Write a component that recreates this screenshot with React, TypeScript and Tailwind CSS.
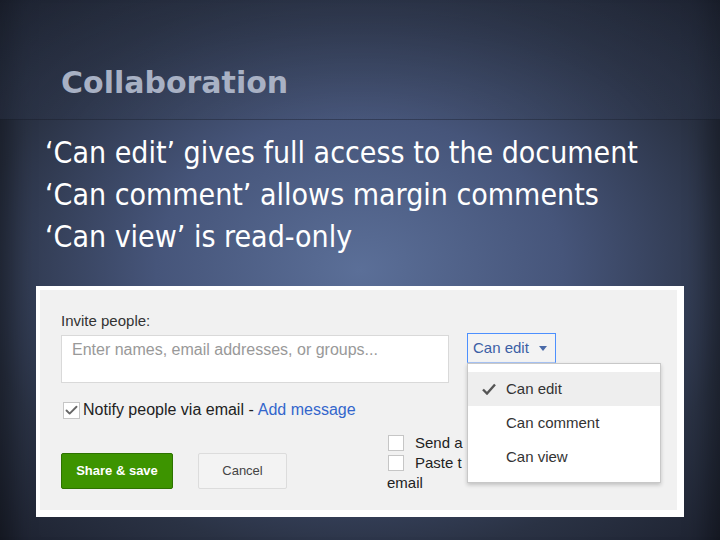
import { Check } from "lucide-react";

function MenuItem({ label, active }: { label: string; active?: boolean }) {
  return (
    <div className={active ? "flex items-center h-[34px] bg-[#eeeeee]" : "flex items-center h-[34px]"}>
      <div className="w-[38px] flex justify-center pl-[4px]">
        {active && (
          <svg width="14" height="12" viewBox="0 0 14 12">
            <path d="M1 6.5 L5 10.5 L13 1.5" stroke="#555" strokeWidth="2.4" fill="none" />
          </svg>
        )}
      </div>
      <span>{label}</span>
    </div>
  );
}

export default function App() {
  return (
    <div className="w-[720px] h-[540px] relative overflow-hidden bg-[radial-gradient(ellipse_at_50%_50%,#5b6f98_0%,#46557a_40%,#2a3244_75%,#1d2230_100%)] shadow-[inset_36px_0_24px_-24px_rgba(0,0,0,0.35),inset_-36px_0_24px_-24px_rgba(0,0,0,0.35)]">
      <div className="h-[120px] pl-[61px] pt-[65px] bg-[radial-gradient(ellipse_at_50%_120%,rgba(80,96,134,0.45)_0%,rgba(44,53,74,0.55)_60%,rgba(28,34,48,0.5)_100%)] border-b border-[rgba(0,0,0,0.05)]">
        <div className="text-[30px] leading-[36px] font-bold text-[#a8b1c4] font-['DejaVu_Sans','Verdana',sans-serif]">
          Collaboration
        </div>
      </div>

      <div className="pl-[45px] pt-[12px] text-white text-[30px] leading-[42px] font-['DejaVu_Sans_Condensed','DejaVu_Sans',sans-serif]">
        <div>‘Can edit’ gives full access to the document</div>
        <div>‘Can comment’ allows margin comments</div>
        <div>‘Can view’ is read-only</div>
      </div>

      <div className="ml-[36px] mt-[28px] w-[648px] h-[231px] bg-white pt-[4px] pl-[4px] pr-[7px] pb-[7px]">
        <div className="relative w-full h-full bg-[#f1f1f1] pl-[21px] pt-[22px] text-[15px] text-[#222] font-['Liberation_Sans','Arial',sans-serif]">
          <div className="leading-[18px] text-[#333]">Invite people:</div>

          <div className="flex items-start gap-[18px] mt-[5px]">
            <div className="w-[388px] h-[48px] bg-white border border-[#d9d9d9] pl-[10px] pt-[4px] text-[16px] text-[#999] leading-[20px]">
              Enter names, email addresses, or groups...
            </div>
            <div className="-mt-[2px] w-[89px] h-[30px] border border-[#4d90fe] border-b-[#a9c4f5] bg-[#f3f3f3] flex items-center pl-[5px] gap-[10px] text-[#3b5fa5]">
              <span>Can edit</span>
              <svg width="8" height="5" viewBox="0 0 8 5">
                <path d="M0 0 L8 0 L4 5 Z" fill="#4a6aa8" />
              </svg>
            </div>
          </div>

          <div className="flex items-center mt-[18px] ml-[2px] leading-[18px] text-[16px]">
            <div className="w-[17px] h-[17px] bg-white border border-[#c6c6c6] flex items-center justify-center">
              <Check size={15} strokeWidth={3} color="#666" />
            </div>
            <span className="ml-[3px]">Notify people via email - </span>
            <span className="ml-[4px] text-[#3366cc]">Add message</span>
          </div>

          <div className="flex items-start mt-[14px]">
            <div className="flex gap-[25px] mt-[20px]">
              <div className="w-[112px] h-[36px] rounded-[2px] bg-[#3d9400] border border-[#2d7300] text-white font-bold text-[13px] flex items-center justify-center">
                Share &amp; save
              </div>
              <div className="w-[89px] h-[36px] rounded-[2px] bg-[#f3f3f3] border border-[#dcdcdc] text-[#444] text-[13px] flex items-center justify-center">
                Cancel
              </div>
            </div>
            <div className="ml-[100px] w-[79px] leading-[20px] whitespace-nowrap">
              <div className="flex items-center">
                <div className="shrink-0 w-[16px] h-[16px] bg-white border border-[#c6c6c6] ml-[1px]" />
                <span className="ml-[11px]">Send a</span>
              </div>
              <div className="flex items-center">
                <div className="shrink-0 w-[16px] h-[16px] bg-white border border-[#c6c6c6] ml-[1px]" />
                <span className="ml-[11px]">Paste t</span>
              </div>
              <div>email</div>
            </div>
          </div>

          <div className="absolute left-[427px] top-[73px] w-[194px] h-[120px] bg-white border border-[#c8c8c8] shadow-[0_2px_4px_rgba(0,0,0,0.2)] pt-[8px] text-[#333]">
            <MenuItem label="Can edit" active />
            <MenuItem label="Can comment" />
            <MenuItem label="Can view" />
          </div>
        </div>
      </div>
    </div>
  );
}
